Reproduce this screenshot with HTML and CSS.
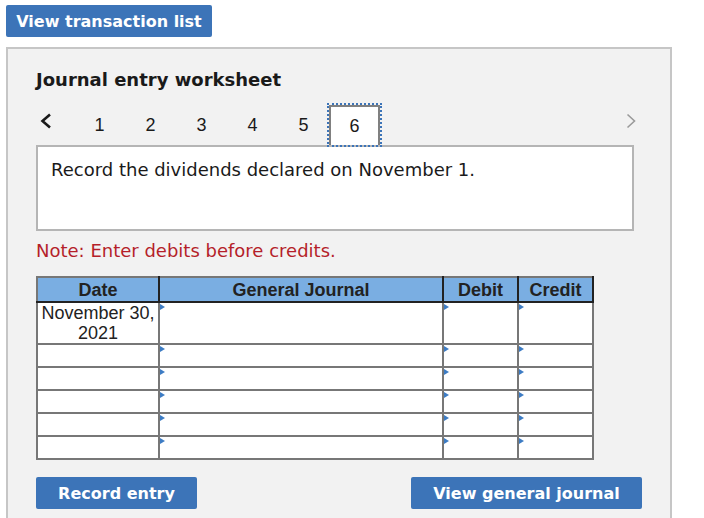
FILE: index.html
```html
<!DOCTYPE html>
<html lang="en">
<head>
    <meta charset="UTF-8">
    <meta name="viewport" content="width=device-width, initial-scale=1.0">
    <title>Journal entry worksheet</title>
    <link rel="stylesheet" href="styles.css">
</head>
<body>
    <button class="btn top-btn" type="button">View transaction list</button>

    <div class="panel">
        <h2 class="panel-title">Journal entry worksheet</h2>

        <!-- Step navigation -->
        <div class="steps">
            <span class="step-arrow prev">
                <svg width="12" height="16" viewBox="0 0 12 16"><path d="M10 1.5 L2.5 8 L10 14.5" fill="none" stroke="#1a1a1a" stroke-width="2.6"/></svg>
            </span>
            <span class="step">1</span>
            <span class="step">2</span>
            <span class="step">3</span>
            <span class="step">4</span>
            <span class="step">5</span>
            <span class="step active">6</span>
            <span class="step-arrow next">
                <svg width="10" height="16" viewBox="0 0 10 16"><path d="M1.5 1.5 L8.5 8 L1.5 14.5" fill="none" stroke="#9a9a9a" stroke-width="1.6"/></svg>
            </span>
        </div>

        <div class="task-box">
            Record the dividends declared on November 1.
        </div>

        <p class="note">Note: Enter debits before credits.</p>

        <table class="journal">
            <thead>
                <tr>
                    <th class="col-date">Date</th>
                    <th class="col-desc">General Journal</th>
                    <th class="col-amt">Debit</th>
                    <th class="col-amt">Credit</th>
                </tr>
            </thead>
            <tbody>
                <tr class="first-row">
                    <td class="date-cell">November 30, 2021</td>
                    <td><span class="tri"></span></td>
                    <td><span class="tri"></span></td>
                    <td><span class="tri"></span></td>
                </tr>
                <tr>
                    <td class="date-cell"></td>
                    <td><span class="tri"></span></td>
                    <td><span class="tri"></span></td>
                    <td><span class="tri"></span></td>
                </tr>
                <tr>
                    <td class="date-cell"></td>
                    <td><span class="tri"></span></td>
                    <td><span class="tri"></span></td>
                    <td><span class="tri"></span></td>
                </tr>
                <tr>
                    <td class="date-cell"></td>
                    <td><span class="tri"></span></td>
                    <td><span class="tri"></span></td>
                    <td><span class="tri"></span></td>
                </tr>
                <tr>
                    <td class="date-cell"></td>
                    <td><span class="tri"></span></td>
                    <td><span class="tri"></span></td>
                    <td><span class="tri"></span></td>
                </tr>
                <tr>
                    <td class="date-cell"></td>
                    <td><span class="tri"></span></td>
                    <td><span class="tri"></span></td>
                    <td><span class="tri"></span></td>
                </tr>
            </tbody>
        </table>

        <div class="actions">
            <button class="btn record-btn" type="button">Record entry</button>
            <button class="btn journal-btn" type="button">View general journal</button>
        </div>
    </div>
</body>
</html>
```

FILE: styles.css
```css
body {
    font-family: 'DejaVu Sans', Verdana, sans-serif;
    background-color: #fff;
    color: #1a1a1a;
    margin: 0;
    padding: 0;
}

.btn {
    font-family: 'DejaVu Sans', Verdana, sans-serif;
    font-size: 16px;
    font-weight: bold;
    color: #fff;
    background-color: #3c74b8;
    border: none;
    border-radius: 2px;
    height: 32px;
    padding: 0;
    cursor: pointer;
}

.top-btn {
    display: block;
    margin: 5px 0 0 6px;
    width: 206px;
}

.panel {
    margin: 10px 0 0 6px;
    width: 634px;
    height: 449px;
    background-color: #f2f2f2;
    border: 2px solid #c6c6c6;
    border-bottom: none;
    padding: 20px 0 0 28px;
    box-sizing: content-box;
}

.panel-title {
    font-size: 18px;
    line-height: 22px;
    font-weight: bold;
    margin: 0 0 12px 0;
}

.steps {
    display: flex;
    align-items: flex-end;
    width: 598px;
    height: 42px;
}

.step-arrow {
    display: flex;
    align-self: flex-start;
    margin-top: 10px;
}

.step-arrow.prev {
    width: 34px;
    padding-left: 4px;
}

.step-arrow.next {
    margin-left: auto;
    margin-right: -2px;
}

.step {
    display: flex;
    align-items: center;
    justify-content: center;
    width: 51px;
    height: 40px;
    font-family: 'Liberation Sans', Arial, sans-serif;
    font-size: 18px;
    color: #1a1a1a;
    box-sizing: border-box;
}

.step.active {
    background-color: #fff;
    border: 2px solid #808080;
    border-bottom: none;
    outline: 2px dotted #3c74b8;
}

.task-box {
    width: 598px;
    height: 86px;
    box-sizing: border-box;
    background-color: #fff;
    border: 2px solid #b5b5b5;
    padding: 12px 13px;
    font-size: 18px;
    line-height: 22px;
}

.note {
    color: #b51f2a;
    font-size: 18px;
    line-height: 22px;
    margin: 9px 0 14px 0;
}

.journal {
    border-collapse: collapse;
    width: 558px;
    border: 2px solid #777;
    font-family: 'Liberation Sans', Arial, sans-serif;
    font-size: 18px;
    color: #222;
}

.journal th {
    background-color: #7aaee2;
    font-weight: bold;
    height: 23px;
    line-height: 20px;
    padding: 0;
    text-align: center;
    border: 2px solid #222;
    border-top-color: #777;
}

.journal th:first-child {
    border-left-color: #777;
}

.col-date {
    width: 120px;
}

.col-desc {
    width: 282px;
}

.col-amt {
    width: 73px;
}

.journal td {
    background-color: #fff;
    border: 2px solid #777;
    height: 21px;
    padding: 0;
    vertical-align: top;
    line-height: 20px;
}

.journal .first-row td {
    height: 40px;
}

.date-cell {
    text-align: center;
}

.tri {
    display: block;
    width: 0;
    height: 0;
    margin-top: 1px;
    border-left: 5px solid #3d7cc4;
    border-top: 3.5px solid transparent;
    border-bottom: 3.5px solid transparent;
}

.actions {
    display: flex;
    justify-content: space-between;
    width: 606px;
    margin-top: 17px;
}

.record-btn {
    width: 161px;
}

.journal-btn {
    width: 231px;
}
```
